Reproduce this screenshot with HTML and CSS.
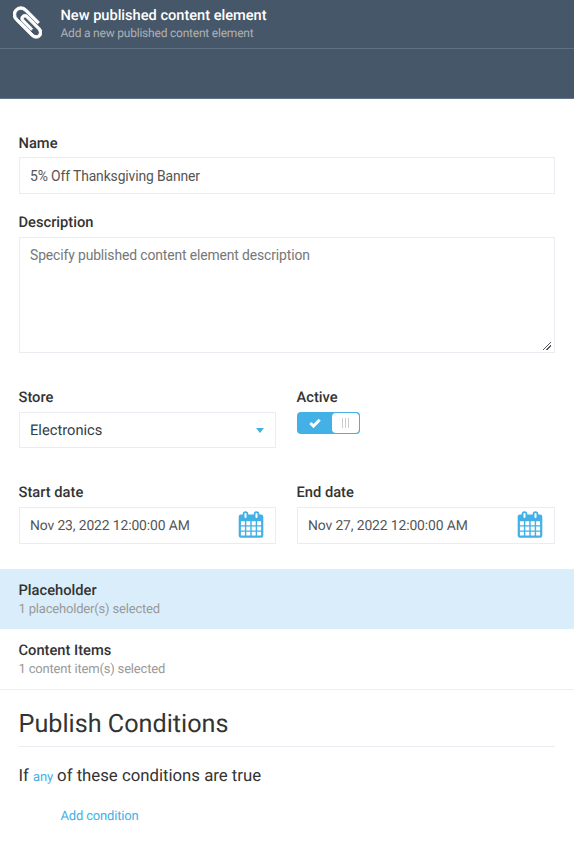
FILE: index.html
```html
<!DOCTYPE html>
<html lang="en">
<head>
<meta charset="utf-8">
<title>New published content element</title>
<link rel="stylesheet" href="styles.css">
</head>
<body>
<svg class="defs" aria-hidden="true">
  <symbol id="calendar" viewBox="0 0 26 28">
    <path fill="currentColor" fill-rule="evenodd" d="M3 3.5H23Q25.3 3.5 25.3 5.7V24.5Q25.3 26.7 23 26.7H3Q.7 26.7.7 24.5V5.7Q.7 3.5 3 3.5ZM2.9 10.2V14.2H6.9V10.2ZM8.3 10.2V14.2H12.3V10.2ZM13.7 10.2V14.2H17.7V10.2ZM19.1 10.2V14.2H23.1V10.2ZM2.9 15.5V19.5H6.9V15.5ZM8.3 15.5V19.5H12.3V15.5ZM13.7 15.5V19.5H17.7V15.5ZM19.1 15.5V19.5H23.1V15.5ZM2.9 20.8V24.5H6.9V20.8ZM8.3 20.8V24.5H12.3V20.8ZM13.7 20.8V24.5H17.7V20.8ZM19.1 20.8V24.5H23.1V20.8Z"/>
    <rect x="5.6" y="1.2" width="3.8" height="6.6" rx="1.8" fill="#fff" stroke="currentColor" stroke-width="1.8"/>
    <rect x="16.6" y="1.2" width="3.8" height="6.6" rx="1.8" fill="#fff" stroke="currentColor" stroke-width="1.8"/>
  </symbol>
</svg>
<header class="head">
  <div class="head-main">
    <svg class="clip" viewBox="0 0 1408 1792"><path d="M1404 1385q0 117-79 196t-196 79q-135 0-235-100l-777-776q-113-115-113-271 0-159 110-270t269-111q158 0 273 113l605 606q10 10 10 22 0 16-30.5 46.5t-46.5 30.5q-13 0-23-10l-606-607q-79-77-181-77-106 0-179 75t-73 181q0 105 76 181l776 777q63 63 145 63 64 0 106-42t42-106q0-82-63-145l-581-581q-26-24-60-24-29 0-48 19t-19 48q0 32 25 59l410 410q10 10 10 22 0 16-31 47t-47 31q-12 0-22-10l-410-410q-63-61-63-149 0-82 57-139t139-57q88 0 149 63l581 581q100 98 100 235z"/></svg>
    <div>
      <h1 class="head-title">New published content element</h1>
      <p class="head-sub">Add a new published content element</p>
    </div>
  </div>
  <div class="toolbar"></div>
</header>
<main>
  <form class="form">
    <div class="field name"><label class="label" for="name">Name</label>
      <input class="box" id="name" value="5% Off Thanksgiving Banner"></div>
    <div class="field description"><label class="label" for="desc">Description</label>
      <textarea class="box area" id="desc" placeholder="Specify published content element description"></textarea></div>
    <div class="row store">
      <div class="field"><span class="label">Store</span>
        <div class="box select"><span>Electronics</span><i class="caret"></i></div></div>
      <div class="field"><span class="label">Active</span>
        <div class="switch">
          <svg class="check" viewBox="0 0 12 10"><path d="M1.3 5 4.5 8.1 10.7 1.8"/></svg>
          <div class="knob"><i></i><i></i><i></i></div>
        </div></div>
    </div>
    <div class="row">
      <div class="field"><span class="label">Start date</span>
        <div class="box date"><span>Nov 23, 2022 12:00:00 AM</span><svg class="cal"><use href="#calendar"/></svg></div></div>
      <div class="field"><span class="label">End date</span>
        <div class="box date"><span>Nov 27, 2022 12:00:00 AM</span><svg class="cal"><use href="#calendar"/></svg></div></div>
    </div>
  </form>
  <section class="item selected"><h2 class="item-title">Placeholder</h2><p class="item-sub">1 placeholder(s) selected</p></section>
  <section class="item"><h2 class="item-title">Content Items</h2><p class="item-sub">1 content item(s) selected</p></section>
  <section class="conditions">
    <h2 class="cond-title">Publish Conditions</h2>
    <p class="cond-text">If <a class="any">any</a> of these conditions are true</p>
    <a class="add">Add condition</a>
  </section>
</main>
</body>
</html>
```
FILE: styles.css
```css
* { box-sizing: border-box; }
body { margin: 0; background: #fff; color: #333; font: 14px/20px Roboto, sans-serif; overflow: hidden; text-rendering: geometricPrecision; }
h1, h2, p { margin: 0; }
.defs { display: none; }
.head { height: 99px; background: #465769; border-bottom: 1px solid #627487; }
.head-main { display: flex; height: 49px; padding: 6px 0 0 13px; border-bottom: 1px solid #5e7184; }
.clip { width: 29px; height: 37px; margin: -2px 18.5px 0 0; fill: #fff; stroke: #fff; stroke-width: 45; }
.head-title { color: #fff; font-size: 14.6px; font-weight: 500; line-height: 19px; }
.head-sub { color: #afb1b3; font-size: 12px; line-height: 16px; letter-spacing: -.21px; }
.form { padding: 34px 19.5px 0 18.5px; height: 470px; }
.field { display: flex; flex-direction: column; }
.label { height: 25px; font-size: 14.7px; font-weight: 500; line-height: 20px; color: #333; }
.name .label { height: 24px; }
.box { display: block; width: 100%; height: 36px; padding: 0 10.5px; border: 1px solid #eaecf2; background: #fff; color: #555; font: 13.9px/20px Roboto, sans-serif; letter-spacing: -.12px; outline: 0; }
.name { height: 79px; }
.name .box { height: 37px; }
.description { height: 175px; }
.box.area { height: 116px; padding-top: 7px; resize: vertical; }
.area::placeholder { color: #777; opacity: 1; }
.area::-webkit-resizer { background: linear-gradient(135deg, transparent 51%, #555 51% 58%, transparent 58% 70%, #555 70% 77%, transparent 77%) 3px 5px / 9px 8px no-repeat; }
.row { display: grid; grid-template-columns: 257px 258px; column-gap: 21px; height: 95px; }
.box.date { height: 37px; }
.select, .date { display: flex; align-items: center; justify-content: space-between; }
.box.select { color: #333d47; font-size: 14.7px; letter-spacing: 0; }
.caret { border: 4.5px solid transparent; border-top: 5px solid #43b0e6; border-bottom: 0; }
.switch { display: flex; align-items: center; justify-content: space-between; width: 63.5px; height: 22px; padding: 1px; border-radius: 4px; background: #43b0e6; }
.check { width: 12px; height: 10px; margin-left: 11.5px; fill: none; stroke: #fff; stroke-width: 3; }
.knob { display: flex; align-items: center; justify-content: center; gap: 2px; width: 27px; height: 20px; border-radius: 4px; background: #fff; }
.knob i { width: 1px; height: 10px; background: #ccc; }
.cal { width: 26px; height: 28px; margin-top: -1px; color: #43b0e6; }
.item { height: 60px; padding: 11px 18.5px 0; border-bottom: 1px solid #eee; }
.selected { border-bottom-color: #d9eefa; background: #d9eefa; }
.item + .item { height: 61px; }
.item-title { font-size: 14.7px; font-weight: 500; line-height: 20px; }
.item-sub { font-size: 13px; line-height: 19px; color: #999; letter-spacing: -.18px; }
.item + .item .item-sub { line-height: 20px; }
.conditions { padding: 17px 19px 0 18.5px; }
.cond-title { height: 40px; border-bottom: 1px solid #eaecf2; font-size: 25.2px; font-weight: 400; line-height: 36px; }
.cond-text { margin-top: 18px; font-size: 16.75px; line-height: 22px; }
.any, .add { color: #43b0e6; font-size: 13px; letter-spacing: -.17px; }
.add { display: block; margin: 18px 0 0 42px; }
```
